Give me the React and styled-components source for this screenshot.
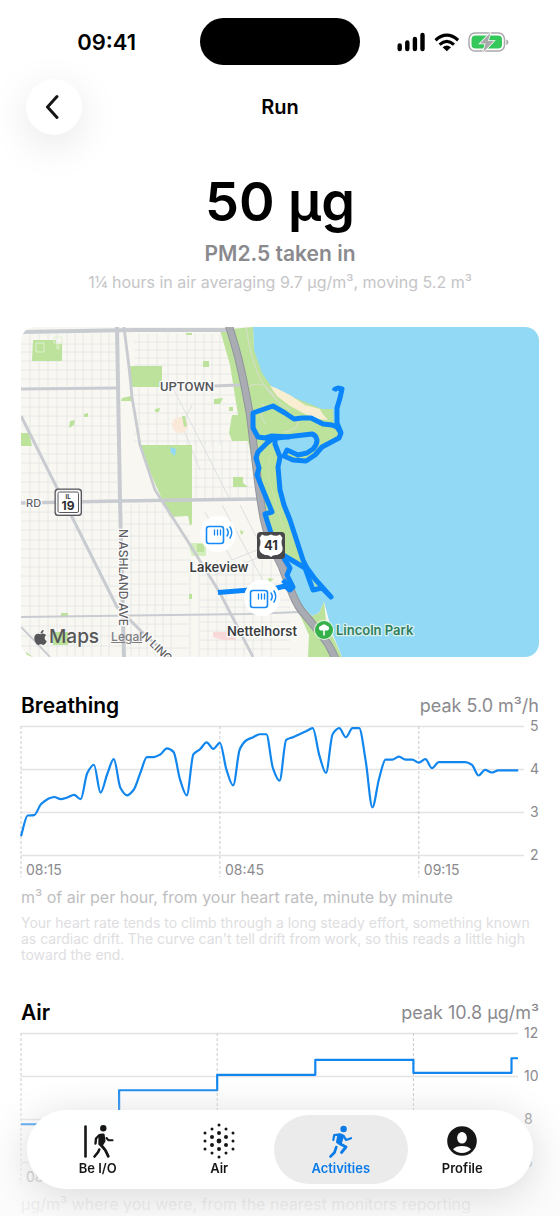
import { useState } from 'react';
import styled, { createGlobalStyle, css } from 'styled-components';
import { FaApple } from 'react-icons/fa';

const GlobalStyle = createGlobalStyle`
  * { box-sizing: border-box; }
  body {
    margin: 0;
    background: #fff;
    color: #000;
    font-family: Inter, "Liberation Sans", sans-serif;
  }
`;

const Screen = styled.div`
  position: relative;
  height: 100vh;
  overflow: hidden;
`;

const Scroll = styled.main`
  height: 100%;
  overflow-y: auto;
  scrollbar-width: none;
`;

const StatusBar = styled.div`
  display: grid;
  grid-template-columns: 1fr 160px 1fr;
  align-items: center;
  height: 47px;
  margin-top: 18px;
`;

const Clock = styled.time`
  justify-self: end;
  margin-right: 64px;
  font-size: 22px;
  font-weight: 600;
`;

const Island = styled.div`
  height: 47px;
  border-radius: 24px;
  background: #000;
`;

const StatusIcons = styled.svg`
  margin-left: 36px;
  width: 114px;
  height: 24px;
`;

const Header = styled.header`
  display: grid;
  grid-template-columns: 56px 1fr 56px;
  align-items: center;
  padding: 14px 26px 0;
`;

const BackButton = styled.button`
  display: flex;
  align-items: center;
  justify-content: center;
  width: 56px;
  height: 56px;
  padding: 0;
  border: 0;
  border-radius: 50%;
  background: #fff;
  box-shadow: 0 10px 40px rgba(0, 0, 0, 0.1);
`;

const Title = styled.h1`
  margin: 0;
  font-size: 20px;
  font-weight: 600;
  line-height: 28px;
  text-align: center;
`;

const Summary = styled.section`
  padding: 35px 20px 33px;
  text-align: center;
`;

const Dose = styled.div`
  font-size: 54px;
  font-weight: 600;
  line-height: 64px;
`;

const DoseLabel = styled.div`
  margin: 6px 0 2px;
  color: #8a8a8e;
  font-size: 21px;
  font-weight: 600;
  line-height: 28px;
`;

const DoseNote = styled.div`
  color: #c5c5c7;
  font-size: 16px;
  line-height: 24px;
`;

const MapCard = styled.div`
  position: relative;
  margin: 0 21px;
  border-radius: 14px;
  overflow: hidden;

  & > svg {
    display: block;
    width: 100%;
  }
`;

const MapCredit = styled.div`
  position: absolute;
  left: 11px;
  bottom: 8px;
  display: flex;
  align-items: center;
  color: #57575a;
  font-size: 19px;
  font-weight: 500;
  line-height: 24px;
`;

const LegalLink = styled.a`
  margin-left: 12px;
  color: #808084;
  font-size: 12px;
  text-decoration: underline;
`;

const Panel = styled.section`
  padding: 35px 21px 1px;
`;

const PanelHead = styled.div`
  display: flex;
  align-items: center;
  justify-content: space-between;
  line-height: 28px;
`;

const PanelTitle = styled.h2`
  margin: 0;
  font-size: 21px;
  font-weight: 600;
`;

const Peak = styled.span`
  color: #8a8a8e;
  font-size: 18px;
`;

const ChartSvg = styled.svg`
  display: block;
  width: 100%;
  overflow: visible;

  text {
    fill: #8a8a8e;
    font-size: 14px;
  }
`;

const Caption = styled.p`
  margin: 5px 0 0;
  color: #bebec1;
  font-size: 16px;
  line-height: 24px;
  white-space: nowrap;
`;

const Footnote = styled.p`
  margin: 6px 0 0;
  color: #dedee1;
  font-size: 14px;
  line-height: 16px;
`;

const Fade = styled.div`
  position: absolute;
  inset: auto 0 0;
  height: 136px;
  background: linear-gradient(rgba(255, 255, 255, 0), rgba(252, 252, 252, 0.45) 40%, rgba(250, 250, 250, 0.84));
  pointer-events: none;
`;

const TabBar = styled.nav`
  position: absolute;
  inset: auto 27px 27px;
  display: grid;
  grid-template-columns: repeat(4, 1fr);
  padding: 5px 10px;
  border-radius: 40px;
  background: rgba(255, 255, 255, 0.96);
  backdrop-filter: blur(4px);
  box-shadow: 0 6px 40px rgba(0, 0, 0, 0.14);
`;

const Tab = styled.button`
  display: flex;
  flex-direction: column;
  align-items: center;
  height: 69px;
  margin: 0 -6px;
  padding: 8px 0 0;
  border: 0;
  border-radius: 35px;
  background: transparent;
  color: #161616;
  font-family: inherit;
  font-size: 13px;
  font-weight: 600;
  line-height: 18px;

  ${({ $active }) => $active && css`
    background: #ebebeb;
    color: #0a7be8;
  `}
`;

const TabIcon = styled.svg`
  width: 36px;
  height: 36px;
`;

// minute by minute, starting 08:15
const BREATHING = [
  2.45, 2.93, 2.94, 3.19, 3.31, 3.36, 3.31, 3.35, 3.41, 3.31, 3.92, 4.11, 3.46, 3.89, 4.24,
  3.57, 3.4, 3.53, 3.92, 4.29, 4.29, 4.35, 4.49, 4.41, 3.76, 3.4, 4.35, 4.47, 4.63, 4.48,
  4.62, 3.99, 3.63, 4.47, 4.68, 4.75, 4.82, 4.82, 4.03, 3.74, 4.69, 4.75, 4.82, 4.89, 4.96,
  4.33, 3.92, 4.82, 4.96, 4.75, 4.96, 4.96, 4.19, 3.12, 3.78, 4.23, 4.23, 4.3, 4.23, 4.23,
  4.16, 4.24, 4.03, 4.17, 4.17, 4.17, 4.17, 4.17, 4.11, 3.86, 3.99, 3.93, 3.98, 3.98, 3.98, 3.98,
];

// [minute, value], each level holds until the next one
const AIR = [[0, 7.78], [15, 9.36], [30, 10.08], [45, 10.77], [60, 10.17], [75, 10.85], [76, 10.85]];

const smoothPath = (pts) => {
  const slope = (i) => (pts[i + 1][1] - pts[i][1]) / (pts[i + 1][0] - pts[i][0]);
  const tangent = pts.map((p, i) => {
    if (i === 0) return slope(0);
    if (i === pts.length - 1) return slope(i - 1);
    const a = slope(i - 1);
    const b = slope(i);
    return a * b <= 0 ? 0 : (2 * a * b) / (a + b);
  });
  return pts.map(([x, y], i) => {
    if (i === 0) return `M${x} ${y}`;
    const [px, py] = pts[i - 1];
    const h = (x - px) / 3;
    return `C${px + h} ${py + tangent[i - 1] * h} ${x - h} ${y - tangent[i] * h} ${x} ${y}`;
  }).join('');
};

const stepPath = (pts) => pts.map(([x, y], i) => (i === 0 ? `M${x} ${y}` : `H${x}V${y}`)).join('');

const TOP = 6;
const ROW = 43;

const Chart = ({ label, ticks, times, perMinute, gridEnd, points, stepped }) => {
  const unit = ROW / (ticks[0] - ticks[1]);
  const scaled = points.map(([m, v]) => [m * perMinute, TOP + 0.5 + (ticks[0] - v) * unit]);
  return (
    <ChartSvg viewBox="0 0 518 160" role="img" aria-label={label}>
      {ticks.map((t, i) => (
        <g key={t}>
          <path d={`M0 ${TOP + i * ROW}.5H${gridEnd}`} stroke="#e3e3e5" strokeWidth="1.5" />
          <text x={gridEnd + 6} y={TOP + i * ROW + 5}>{t}</text>
        </g>
      ))}
      {times.map((t, i) => (
        <g key={t}>
          <path d={`M${i * 30 * perMinute} ${TOP}V157`} stroke="#cbcbce" strokeDasharray="3 2" />
          <text x={i * 30 * perMinute + 5} y="155">{t}</text>
        </g>
      ))}
      <path
        d={stepped ? stepPath(scaled) : smoothPath(scaled)}
        fill="none"
        stroke="#1186ee"
        strokeWidth="2.2"
        strokeLinejoin="round"
      />
    </ChartSvg>
  );
};

const lines = (list, from, to, vertical) => list
  .map((n) => (vertical ? `M${n} ${from}V${to}` : `M${from} ${n}H${to}`))
  .join('');

const MINOR_STREETS = [
  lines([30, 39, 48, 57, 67, 75, 83, 92, 101, 109], 334, 657, true),
  lines([139, 148, 157, 168, 177, 187, 195, 204, 212, 220], 334, 445, true),
  lines([196, 205, 213, 222, 230, 238, 247], 440, 498, true),
  lines([131, 139, 147, 155, 163, 171], 504, 657, true),
  lines([190, 199, 208, 217, 226, 235, 244, 253, 262, 271], 560, 657, true),
  lines([344, 352, 361, 370, 379, 398, 407, 416, 426, 435, 444, 454, 463, 473, 482, 492], 21, 118, false),
  lines([342, 350, 358, 365, 374, 395, 404, 413, 424, 434, 441], 134, 238, false),
  lines([452, 460, 469, 478, 487], 193, 256, false),
  lines([512, 521, 530, 540, 549, 558, 567, 576, 586, 596, 606, 626, 636, 646], 21, 122, false),
  lines([512, 524, 536, 548, 560, 572, 584, 595, 605, 624, 636, 648], 124, 190, false),
  lines([575, 584, 600, 607, 622, 631, 640, 649], 200, 290, false),
].join('');

const SensorPin = ({ x, y }) => (
  <g transform={`translate(${x} ${y})`}>
    <circle r="18" fill="#fff" />
    <g fill="none" stroke="#1489f5" strokeWidth="1.6" strokeLinecap="round">
      <rect x="-11.500" y="-7.500" width="17" height="17" rx="2.5" />
      <path d="M-3.500 -4V1M-.5 -4V1M2.500 -4V1" strokeWidth="1.3" />
      <path d="M9 -5Q11.500 -1.500 9 2M12 -7Q15.500 -1.500 12 4" strokeWidth="1.5" />
    </g>
  </g>
);

const RouteMap = () => (
  <svg viewBox="21 327 518 330" role="img" aria-label="Route along the lakefront">
    <rect x="21" y="327" width="518" height="330" fill="#f8f7f2" />
    <path d={MINOR_STREETS} stroke="#e5e5e7" strokeWidth="0.9" />
    <path
      d="M173 388L192 425L215 470L230 500M222 505L252 560L268 590M240 505L262 548M205 512L232 560L262 548M215 575L262 556M192 405L182 425L200 470"
      fill="none"
      stroke="#dedee1"
    />

    <g fill="#bce29b">
      <path d="M33 340H56V344H62V361H32Z" />
      <path d="M130 366H162V382L164 387H130Z" />
      <path d="M141 445H192V524L190 526L188 516L170 517L150 472Z" />
      <path d="M203 361h6v6h-6ZM70 421l5-1-1 5-5 3ZM122 398l9-2v5h-10ZM155 409l5-1-1 4h-4ZM214 399l9-1-3 6h-6ZM229 407h4v4h-4ZM84 414l4-1v4h-4ZM21 433h8l3 13h-11ZM233 477h10v6l5 4h-15ZM189 594h3v5h-3ZM61 613h7v3h-7ZM53 632h15v13h-15ZM186 333h6v2h-6ZM26 652l7 5h-7Z" />
      <path d="M188 543h18v13h-14Z" fill="#d3efbd" />
      <path d="M197 544h7v8h-7ZM226 515l3 4M240 530l4 2-3 3ZM268 578l6 1-5 3Z" />
    </g>
    <path d="M36 343h8v9h-8ZM54 337h8v6h-3v6h-2v-6h-3Z" fill="none" stroke="#dff0cf" />
    <path d="M170 447L176 449L175 456L171 453Z" fill="#92d9f5" />
    <path d="M213 632h23v8h-13l-10-3Z" fill="#f8d9d8" />
    <circle cx="180" cy="425" r="8" fill="#fae8d9" />
    <path d="M182 416h3l2 10-3 1Z" fill="#bce29b" />

    <path
      d="M253 327H539V657H342L333 635L324 602L319 613L312 616L302 606L294 590L288 570L275 540L262 500L258 450Z"
      fill="#92d9f5"
    />
    <path
      d="M220 330L253 327L254 350L262 373L271 386L290 396L322 409H333L334 425L342 433L338 438L322 447L306 461L292 460L283 455L287 450L297 455L306 454L315 446L317 439L313 435L277 440L280 460L279 475L283 500L290 520L303 562L301 567L285 555L270 548L258 500L250 450L248 441H232L229 433L232 415H238L230 365Z"
      fill="#bce29b"
    />
    <path d="M305 566L318 590L324 588Z" fill="#bce29b" />
    <path d="M295 590L302 606L312 616L319 613L324 602L326 620L333 637L342 657H308L309 635L300 615L288 592Z" fill="#bce29b" />
    <path d="M270 386L276 388L290 395L305 405L320 409L322 413L328 420L318 419L305 414L290 406L277 396Z" fill="#f9eed2" />
    <path d="M246 327Q252 365 262 382T290 410M266 425Q258 415 264 404M243 390Q262 375 275 398M298 418Q300 430 284 432" fill="none" stroke="#d4dfc4" strokeWidth="1.2" />
    <path d="M270 455Q265 470 272 490L284 530" fill="none" stroke="#cfe0ab" />

    <g fill="none" stroke="#c8cbd0">
      <path d="M21 332L135 330L229 330" strokeWidth="4" />
      <path d="M117 327L120 500L124 657" strokeWidth="4" />
      <path d="M124 327L129 367L132 397L140 445L155 490L187 540L220 593L253 657" strokeWidth="2.800" />
      <path d="M21 389L117 388M213 386L240 385" strokeWidth="3" />
      <path d="M21 503L120 501L262 499" strokeWidth="3.500" />
      <path d="M21 416L57 488L72 517L117 607L143 633L172 659" strokeWidth="3" />
      <path d="M21 617L247 614L300 612M21 627L50 657" strokeWidth="1.800" />
    </g>
    <path
      d="M229 326Q236 348 240 365T250 415L256 465Q260 500 264 520T282 567L292 593Q298 608 306 616L320 633Q330 645 336 660"
      fill="none"
      stroke="#92959c"
      strokeWidth="8"
    />
    <path
      d="M229 326Q236 348 240 365T250 415L256 465Q260 500 264 520T282 567L292 593Q298 608 306 616L320 633Q330 645 336 660"
      fill="none"
      stroke="#a9acb2"
      strokeWidth="6"
    />

    <g fill="none" stroke="#0a86fa" strokeWidth="5" strokeLinejoin="round">
      <path d="M334 391L335 389L338 388L342 389L340 398L337 408L337 423L341 433L339 438L322 447L315 455L306 461L293 460L284 456L287 450L298 455L307 453L313 449Q317 445 317 440Q316 435 312 434L277 438L265 438" />
      <path d="M341 433L337 427L332 425L323 424L311 418L302 418L294 419L285 413L273 406L253 413V428L258 437L265 438L272 436L290 437" />
      <path d="M275 437L267 443L258 452L256 458L259 468L257 475L263 490L272 512L265 514L271 533L282 555L290 568L287 575L293 587L290 590L285 586L277 588L218 592.500" />
      <path d="M275 438V444L280 457L278 467L280 490L284 505L290 520L303 560L307 568L315 579L331 597L322 588L313 590L305 568L283 555" />
      <path d="M283 580L292 590" />
    </g>

    <g fontFamily="Inter, sans-serif" stroke="#fff" strokeWidth="2.500" strokeLinejoin="round" paintOrder="stroke">
      <text x="187" y="391" fontFamily="Roboto, sans-serif" fontSize="13" fontWeight="500" fill="#56575b" textAnchor="middle">UPTOWN</text>
      <text x="26" y="507" fontSize="11" fontWeight="500" fill="#626266">RD</text>
      <text transform="translate(119 529) rotate(90)" fontSize="12" fontWeight="500" fill="#626266">N ASHLAND AVE</text>
      <text transform="translate(141 637) rotate(44)" fontSize="11" fontWeight="500" fill="#626266">N LINC</text>
      <text x="219" y="572" fontSize="13" fontWeight="600" fill="#3d3d40" textAnchor="middle">Lakeview</text>
      <text x="262" y="636" fontSize="13" fontWeight="600" fill="#3d3d40" textAnchor="middle">Nettelhorst</text>
      <text x="336" y="635" fontSize="13" fontWeight="600" fill="#2f7f5f" stroke="#d8f0ee">Lincoln Park</text>
    </g>

    <rect x="54.500" y="488.500" width="27.500" height="27.500" rx="3.500" fill="#58585c" />
    <rect x="56" y="490" width="24.500" height="24.500" rx="2.500" fill="#fff" stroke="#d5d5d8" strokeWidth="0.500" />
    <rect x="58" y="492" width="20.500" height="20.500" rx="1.500" fill="none" stroke="#58585c" />
    <g fontFamily="Inter, sans-serif" fontWeight="700" fill="#2f2f32" textAnchor="middle">
      <text x="68" y="499" fontSize="6">IL</text>
      <text x="68" y="510" fontSize="12">19</text>
    </g>

    <rect x="257" y="532" width="28" height="27" rx="3.500" fill="#48484b" />
    <path d="M262 534.500Q266 537 271 534.500Q276 537 280 534.500L282.500 538Q280.500 542 282.500 547Q283.500 553 277 555Q273 554.500 271 557Q269 554.500 265 555Q258.500 553 259.500 547Q261.500 542 259.500 538Z" fill="#fff" />
    <text x="271" y="550" fontFamily="Inter, sans-serif" fontSize="13" fontWeight="700" fill="#2f2f32" textAnchor="middle">41</text>

    <SensorPin x={218} y={534} />
    <SensorPin x={262} y={598} />

    <circle cx="324" cy="630" r="10" fill="#e6f5e2" />
    <circle cx="324" cy="630" r="9" fill="#35b04a" />
    <path d="M324 624.500a3 3 0 0 1 3 1.500 2.300 2.300 0 0 1 .5 4.500h-7a2.300 2.300 0 0 1 .5-4.500 3 3 0 0 1 3-1.500ZM323.200 630h1.600v5.500h-1.600Z" fill="#fff" />
  </svg>
);

const AIR_DOTS = [[-14, 8, 3], [-7, 12, 4], [0, 16, 5], [7, 12, 4], [14, 8, 3]].flatMap(([x, top, count]) => (
  Array.from({ length: count }, (_, i) => {
    const y = i * 8 - top;
    const dist = Math.hypot(x, y);
    return { x, y, r: dist < 1 ? 2.4 : dist < 9 ? 2 : 1.5 };
  })
));

const WalkIcon = () => (
  <TabIcon viewBox="80 1122 36 36">
    <g fill="none" stroke="currentColor" strokeLinecap="round" strokeLinejoin="round">
      <path d="M85.500 1125.500V1155.500" strokeWidth="2.600" />
      <path d="M99 1134.500L96 1137.500L95.500 1142.500" strokeWidth="2.400" />
      <path d="M106.500 1137L108.300 1139.200H112.500" strokeWidth="2.100" />
      <path d="M101 1144L105.300 1149.200L108.300 1155.300" strokeWidth="2.800" />
      <path d="M99.300 1148.500L98 1151.200L94.500 1155.500" strokeWidth="2.600" />
      <path d="M100 1134.300L103.200 1134L104 1140L101.500 1144L99.800 1143Z" fill="currentColor" strokeWidth="3" />
    </g>
    <circle cx="103.300" cy="1127.300" r="3.200" fill="currentColor" />
  </TabIcon>
);

const AirIcon = () => (
  <TabIcon viewBox="-18 -18 36 36" fill="currentColor">
    {AIR_DOTS.map((d) => <circle key={`${d.x},${d.y}`} cx={d.x} cy={d.y} r={d.r} />)}
  </TabIcon>
);

const RunIcon = () => (
  <TabIcon viewBox="323 1122 36 36">
    <g fill="none" stroke="currentColor" strokeLinecap="round" strokeLinejoin="round">
      <path d="M333.300 1139L334.200 1134.200L340 1133.300L343.800 1135L346 1139L351 1137.200" strokeWidth="2.200" />
      <path d="M338.800 1134.500L342.500 1135.500L340.500 1141.500L337.500 1141Z" fill="currentColor" strokeWidth="3" />
      <path d="M339 1142.200L346 1146L341.500 1151.500" strokeWidth="2.800" />
      <path d="M336.300 1146L334.500 1151.500L330.500 1155.500" strokeWidth="2.600" />
    </g>
    <circle cx="343.600" cy="1128" r="3.200" fill="currentColor" />
  </TabIcon>
);

const ProfileIcon = () => (
  <TabIcon viewBox="-18 -18 36 36">
    <circle r="14.800" fill="currentColor" />
    <ellipse cy="-3.200" rx="4.900" ry="5.800" fill="#fff" />
    <path d="M-9 8.300C-6 3.800 6 3.800 9 8.300C4.500 13.200 -4.500 13.200 -9 8.300Z" fill="#fff" />
  </TabIcon>
);

const TABS = [
  { name: 'Be I/O', Icon: WalkIcon },
  { name: 'Air', Icon: AirIcon },
  { name: 'Activities', Icon: RunIcon },
  { name: 'Profile', Icon: ProfileIcon },
];

const App = () => {
  const [tab, setTab] = useState('Activities');

  return (
    <Screen>
      <GlobalStyle />
      <Scroll>
        <StatusBar>
          <Clock>09:41</Clock>
          <Island />
          <StatusIcons viewBox="396 29 114 24" aria-hidden="true">
            <path d="M399.700 44.500V48M407.300 41.500V48M414.900 38V48M422.500 34V48" stroke="#000" strokeWidth="4.400" strokeLinecap="round" />
            <g fill="none" stroke="#000" strokeWidth="3.200">
              <path d="M435.500 39.200Q446.800 29.200 458.100 39.200" />
              <path d="M439.600 43.600Q446.800 37.200 454 43.600" />
            </g>
            <path d="M442.600 46.200Q446.800 42.800 451 46.200L446.800 50.300Z" />
            <rect x="469" y="32" width="35.500" height="18" rx="6" fill="#fff" stroke="#a9a9ac" strokeWidth="1.500" />
            <rect x="471.500" y="34.500" width="30.500" height="13" rx="4" fill="#34c759" />
            <path d="M506.300 38.500q2 .7 2 2.700t-2 2.700Z" fill="#a9a9ac" />
            <path d="M490.500 31.500L480 42.500H485.500L483 51.500L494 40H488Z" fill="#a9a9ac" stroke="#fff" strokeWidth="1.500" paintOrder="stroke" />
          </StatusIcons>
        </StatusBar>
        <Header>
          <BackButton aria-label="Back">
            <svg width="16" height="26" viewBox="0 0 16 26">
              <path d="M11 2.500L1.500 13L11 23.500" fill="none" stroke="#161616" strokeWidth="3" strokeLinecap="round" strokeLinejoin="round" />
            </svg>
          </BackButton>
          <Title>Run</Title>
        </Header>
        <Summary>
          <Dose>50 µg</Dose>
          <DoseLabel>PM2.5 taken in</DoseLabel>
          <DoseNote>1¼ hours in air averaging 9.7 µg/m³, moving 5.2 m³</DoseNote>
        </Summary>
        <MapCard>
          <RouteMap />
          <MapCredit>
            <FaApple size={17} />
            Maps
            <LegalLink href="#legal">Legal</LegalLink>
          </MapCredit>
        </MapCard>
        <Panel>
          <PanelHead>
            <PanelTitle>Breathing</PanelTitle>
            <Peak>peak 5.0 m³/h</Peak>
          </PanelHead>
          <Chart
            label="Breathing"
            ticks={[5, 4, 3, 2]}
            times={['08:15', '08:45', '09:15']}
            perMinute={6.63}
            gridEnd={503}
            points={BREATHING.map((v, m) => [m, v])}
          />
          <Caption>m³ of air per hour, from your heart rate, minute by minute</Caption>
          <Footnote>
            Your heart rate tends to climb through a long steady effort, something known as cardiac
            drift. The curve can't tell drift from work, so this reads a little high toward the end.
          </Footnote>
        </Panel>
        <Panel>
          <PanelHead>
            <PanelTitle>Air</PanelTitle>
            <Peak>peak 10.8 µg/m³</Peak>
          </PanelHead>
          <Chart
            label="Air"
            ticks={[12, 10, 8, 6]}
            times={['08:15', '08:45', '09:15']}
            perMinute={6.54}
            gridEnd={497}
            points={AIR}
            stepped
          />
          <Caption>µg/m³ where you were, from the nearest monitors reporting</Caption>
        </Panel>
      </Scroll>
      <Fade />
      <TabBar>
        {TABS.map(({ name, Icon }) => (
          <Tab key={name} $active={tab === name} onClick={() => setTab(name)}>
            <Icon />
            {name}
          </Tab>
        ))}
      </TabBar>
    </Screen>
  );
};

export default App;
